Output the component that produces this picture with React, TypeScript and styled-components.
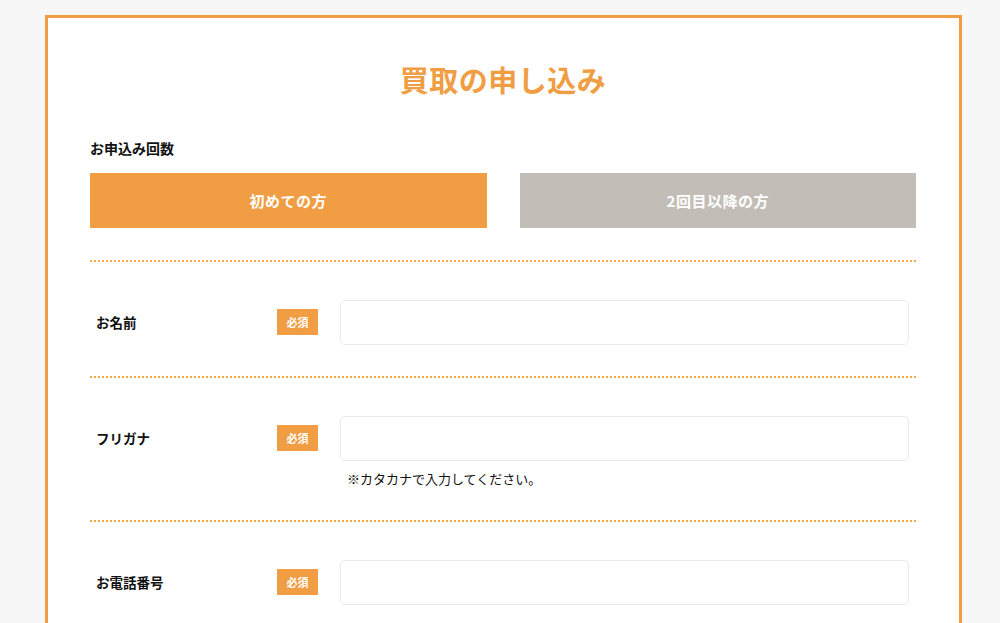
import React, { ReactElement } from 'react';
import styled, { createGlobalStyle } from 'styled-components';

const GlobalStyle = createGlobalStyle`
  html, body {
    margin: 0;
    padding: 0;
    background: #f7f7f7;
    font-family: "Noto Sans CJK JP", "Noto Sans", sans-serif;
    color: #111;
  }
  * { box-sizing: border-box; }
`;

const Page = styled.div`
  padding: 15px 38px 0 45px;
  height: 623px;
  overflow: hidden;
`;

const Card = styled.section`
  background: #fff;
  border: 3px solid #f09d43;
  border-bottom: none;
  padding: 0 43px 40px 42px;
  min-height: 700px;
`;

const Title = styled.h1`
  margin: 0;
  padding: 40px 0 0;
  height: 120px;
  text-align: center;
  color: #f09d43;
  font-size: 29px;
  font-weight: 700;
  letter-spacing: 0.5px;
`;

const SectionLabel = styled.div`
  font-size: 14px;
  font-weight: 700;
  line-height: 20px;
  margin-bottom: 15px;
`;

const Tabs = styled.div`
  display: grid;
  grid-template-columns: 1fr 1fr;
  gap: 33px;
  padding-bottom: 32px;
  border-bottom: 2px dotted #f0ab45;
`;

const Tab = styled.button<{ $active?: boolean }>`
  height: 55px;
  border: none;
  background: ${(p) => (p.$active ? '#f09d43' : '#c2beb7')};
  color: #fff;
  font-family: inherit;
  font-size: 15px;
  font-weight: 700;
  letter-spacing: 0.5px;
  cursor: pointer;
`;

const Row = styled.div`
  display: grid;
  grid-template-columns: 181px 41px 1fr;
  align-items: start;
  padding: 38px 7px 31px 6px;
  border-bottom: 2px dotted #f0ab45;
`;

const Label = styled.div`
  font-size: 13.5px;
  font-weight: 700;
  line-height: 45px;
`;

const Badge = styled.span`
  margin-top: 9px;
  display: flex;
  align-items: center;
  justify-content: center;
  height: 26px;
  background: #f09d43;
  color: #fff;
  font-size: 11px;
  font-weight: 700;
`;

const Field = styled.div`
  display: flex;
  flex-direction: column;
  padding-left: 22px;
`;

const Input = styled.input`
  height: 45px;
  border: 1px solid #ebebeb;
  border-radius: 5px;
  background: #fff;
  font-family: inherit;
  font-size: 14px;
  padding: 0 12px;
  outline: none;
`;

const Note = styled.p`
  margin: 8px 0 0 7px;
  font-size: 13px;
  line-height: 20px;
`;

interface IFormRow {
  label: string;
  note?: string;
}

const rows: IFormRow[] = [
  { label: 'お名前' },
  { label: 'フリガナ', note: '※カタカナで入力してください。' },
  { label: 'お電話番号' },
];

const App = (): ReactElement => (
  <>
    <GlobalStyle />
    <Page>
      <Card>
        <Title>買取の申し込み</Title>
        <SectionLabel>お申込み回数</SectionLabel>
        <Tabs>
          <Tab $active>初めての方</Tab>
          <Tab>2回目以降の方</Tab>
        </Tabs>
        {rows.map((row) => (
          <Row key={row.label}>
            <Label>{row.label}</Label>
            <Badge>必須</Badge>
            <Field>
              <Input type="text" />
              {row.note && <Note>{row.note}</Note>}
            </Field>
          </Row>
        ))}
      </Card>
    </Page>
  </>
);

export default App;
